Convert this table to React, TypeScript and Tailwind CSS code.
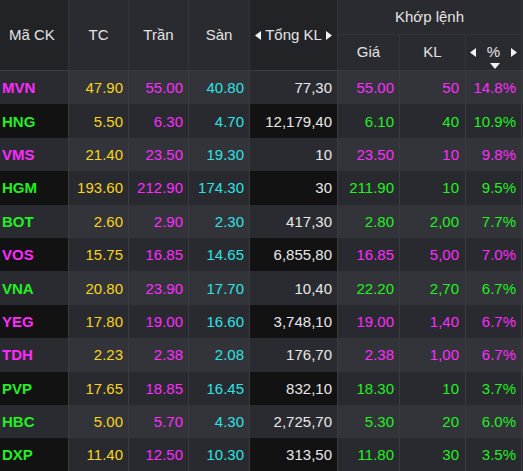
const cols = 'grid grid-cols-[69px_60px_60px_61px_88px_62px_66px_56px_60px]';

const Y = 'text-[#f9d51a]';
const M = 'text-[#ff2bff]';
const C = 'text-[#2ee3e3]';
const G = 'text-[#21f021]';
const W = 'text-[#e8e8e8]';

type Row = {
  code: string;
  up: boolean;
  tc: string;
  tran: string;
  san: string;
  kl: string;
  gia: string;
  vol: string;
  pct: string;
  tail: string;
};

const rows: Row[] = [
  { code: 'MVN', up: false, tc: '47.90', tran: '55.00', san: '40.80', kl: '77,30', gia: '55.00', vol: '50', pct: '14.8%', tail: 'bg-[#21f021]' },
  { code: 'HNG', up: true, tc: '5.50', tran: '6.30', san: '4.70', kl: '12,179,40', gia: '6.10', vol: '40', pct: '10.9%', tail: 'bg-[#21f021]' },
  { code: 'VMS', up: false, tc: '21.40', tran: '23.50', san: '19.30', kl: '10', gia: '23.50', vol: '10', pct: '9.8%', tail: 'bg-[#ff2a2a]' },
  { code: 'HGM', up: true, tc: '193.60', tran: '212.90', san: '174.30', kl: '30', gia: '211.90', vol: '10', pct: '9.5%', tail: 'bg-[#21f021]' },
  { code: 'BOT', up: true, tc: '2.60', tran: '2.90', san: '2.30', kl: '417,30', gia: '2.80', vol: '2,00', pct: '7.7%', tail: 'bg-[#f7a21c]' },
  { code: 'VOS', up: false, tc: '15.75', tran: '16.85', san: '14.65', kl: '6,855,80', gia: '16.85', vol: '5,00', pct: '7.0%', tail: 'bg-[#21f021]' },
  { code: 'VNA', up: true, tc: '20.80', tran: '23.90', san: '17.70', kl: '10,40', gia: '22.20', vol: '2,70', pct: '6.7%', tail: 'bg-[#21f021]' },
  { code: 'YEG', up: false, tc: '17.80', tran: '19.00', san: '16.60', kl: '3,748,10', gia: '19.00', vol: '1,40', pct: '6.7%', tail: 'bg-[#ff2bff]' },
  { code: 'TDH', up: false, tc: '2.23', tran: '2.38', san: '2.08', kl: '176,70', gia: '2.38', vol: '1,00', pct: '6.7%', tail: 'bg-[#21f021]' },
  { code: 'PVP', up: true, tc: '17.65', tran: '18.85', san: '16.45', kl: '832,10', gia: '18.30', vol: '10', pct: '3.7%', tail: 'bg-[#21f021]' },
  { code: 'HBC', up: true, tc: '5.00', tran: '5.70', san: '4.30', kl: '2,725,70', gia: '5.30', vol: '20', pct: '6.0%', tail: 'bg-[#21f021]' },
  { code: 'DXP', up: true, tc: '11.40', tran: '12.50', san: '10.30', kl: '313,50', gia: '11.80', vol: '30', pct: '3.5%', tail: 'bg-[#21f021]' },
];

const Tri = ({ dir }: { dir: 'l' | 'r' }) => (
  <svg width="7" height="9" viewBox="0 0 7 9" className="shrink-0">
    {dir === 'l' ? <polygon points="6,0 6,9 0,4.5" fill="#f2f2f2" /> : <polygon points="1,0 1,9 7,4.5" fill="#f2f2f2" />}
  </svg>
);

const Down = () => (
  <svg width="10" height="6" viewBox="0 0 10 6">
    <polygon points="0,0 10,0 5,6" fill="#f2f2f2" />
  </svg>
);

export default function App() {
  return (
    <div className="w-[523px] h-[471px] overflow-hidden bg-[#121212] font-['Liberation_Sans',Arial,sans-serif] text-[15px]">
      <div className="w-[600px]">
        {/* header */}
        <div className={`${cols} grid-rows-[35px_35px] border-b border-[#3a3b40] text-[#e4e4e4]`}>
          <div className="row-span-2 flex items-center pl-[9px] bg-[#222327] border-r border-[#34353a]">Mã CK</div>
          <div className="row-span-2 flex items-center justify-center bg-[#2a2b30] border-r border-[#34353a]">TC</div>
          <div className="row-span-2 flex items-center justify-center bg-[#2a2b30] border-r border-[#34353a]">Trần</div>
          <div className="row-span-2 flex items-center justify-center bg-[#2a2b30] border-r border-[#34353a]">Sàn</div>
          <div className="row-span-2 flex items-center justify-center gap-[3px] bg-[#222327] border-r border-[#34353a]">
            <Tri dir="l" />
            <span>Tổng KL</span>
            <Tri dir="r" />
          </div>
          <div className="col-span-3 flex items-center justify-center bg-[#2a2b30] border-b border-[#3a3b40] border-r border-[#34353a]">Khớp lệnh</div>
          <div className="row-span-2 flex flex-col justify-between bg-[#2a2b30] pl-[1px] py-[10px]">
            <div className="w-[2px] h-[10px] bg-[#d8d8d8]" />
            <div className="w-[2px] h-[10px] bg-[#d8d8d8]" />
          </div>
          <div className="flex items-center justify-center bg-[#2a2b30] border-r border-[#34353a]">Giá</div>
          <div className="flex items-center justify-center bg-[#2a2b30] border-r border-[#34353a]">KL</div>
          <div className="relative flex items-center justify-center gap-[10px] bg-[#2a2b30] border-r border-[#34353a]">
            <Tri dir="l" />
            <span>%</span>
            <Tri dir="r" />
            <div className="absolute left-[24px] bottom-[1px]">
              <Down />
            </div>
          </div>
        </div>

        {/* body */}
        {rows.map((r, i) => {
          const odd = i % 2 === 0;
          const side = odd ? 'bg-[#2a2b30]' : 'bg-[#121212]';
          const cell = odd ? 'bg-[#33343a]' : 'bg-[#292a30]';
          const match = r.up ? G : M;
          const b = 'border-r border-[#3a3b40]';
          return (
            <div key={r.code} className={`${cols} h-[33.4px] leading-none`}>
              <div className={`${side} ${b} flex items-center pl-[2px] font-bold text-[15px] ${match}`}>{r.code}</div>
              <div className={`${cell} ${b} flex items-center justify-end pr-[5px] ${Y}`}>{r.tc}</div>
              <div className={`${cell} ${b} flex items-center justify-end pr-[5px] ${M}`}>{r.tran}</div>
              <div className={`${cell} ${b} flex items-center justify-end pr-[5px] ${C}`}>{r.san}</div>
              <div className={`${side} ${b} flex items-center justify-end pr-[5px] ${W}`}>{r.kl}</div>
              <div className={`${cell} ${b} flex items-center justify-end pr-[5px] ${match}`}>{r.gia}</div>
              <div className={`${cell} ${b} flex items-center justify-end pr-[6px] ${match}`}>{r.vol}</div>
              <div className={`${cell} ${b} flex items-center justify-end pr-[5px] ${match}`}>{r.pct}</div>
              <div className={`${cell} flex items-center pl-[1px]`}>
                <div className={`w-[2px] h-[9px] ${r.tail}`} />
              </div>
            </div>
          );
        })}
      </div>
    </div>
  );
}
